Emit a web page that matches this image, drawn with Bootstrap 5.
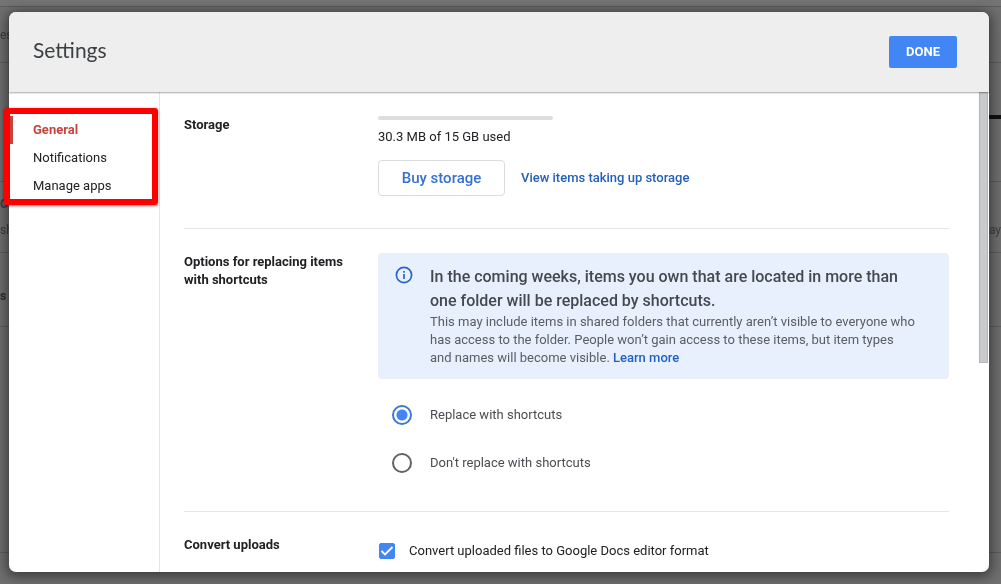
<!DOCTYPE html>
<html lang="en">
<head>
<meta charset="utf-8">
<meta name="viewport" content="width=device-width, initial-scale=1">
<title>Settings</title>
<link href="https://cdn.jsdelivr.net/npm/bootstrap@5.3.0/dist/css/bootstrap.min.css" rel="stylesheet">
<style>
  body { font-family: Roboto, "Liberation Sans", sans-serif; font-size: 13px; line-height: 18px; color: #202124; background: #6f6f70; }
  .shell { height: 100vh; padding: 12px 12px 12px 9px; }
  /* dimmed file list behind the dialog */
  .page-behind { z-index: 0; color: #3d3e40; font-size: 12px; }
  .page-behind .line { border-bottom: 1px solid #5c5c5d; }
  .line-top { height: 7px; background: #747475; }
  .line-bar { height: 56px; }
  .line-head { height: 119px; }
  .line-file { height: 71px; }
  .line-day { height: 74px; padding-top: 12px; color: #2c2c2e; }
  .line-rest { height: 226px; }
  .scroll-mark { width: 12px; height: 4px; margin-top: 52px; background: #111; }
  .dialog-box { z-index: 1; border-radius: 7px; background: #fff; box-shadow: 0 2px 12px 3px rgba(0,0,0,.45); }
  .dialog-head { height: 80px; padding: 0 32px 0 24px; background: #eee; border-radius: 7px 7px 0 0; box-shadow: 0 1px 2px rgba(0,0,0,.35); z-index: 2; }
  .dialog-title { padding-bottom: 4px; font-family: Lato, Roboto, sans-serif; font-size: 21px; line-height: 24px; color: #3c4043; }
  .btn-done { width: 68px; height: 32px; padding: 0; font-size: 13px; font-weight: 700; color: #fff; background: #4285f4; border: 0; border-radius: 2px; }
  .side { width: 151px; padding-top: 24px; border-right: 1px solid #e5e5e5; }
  .side .nav-link { padding: 0 24px; line-height: 28px; color: #202124; }
  .side .nav-link.active { color: #c5443d; font-weight: 700; box-shadow: inset 4px 0 #c5443d; }
  .callout { top: 16px; left: -5px; right: 1px; height: 97px; border: 6px solid #f00; border-radius: 3px; box-shadow: 0 1px 3px rgba(0,0,0,.5); pointer-events: none; z-index: 3; }
  .pane { padding: 0 40px 0 24px; }
  .setting { padding: 24px 0; border-bottom: 1px solid #e5e5e5; }
  .setting-storage { padding-bottom: 32px; }
  .setting-name { width: 194px; padding-right: 24px; font-size: 13px; line-height: 18px; font-weight: 700; }
  .meter { width: 175px; height: 4px; border-radius: 2px; background: #dedede; }
  .storage-actions { gap: 16px; padding-top: 14px; }
  .btn-buy { width: 127px; height: 36px; padding: 0; font-size: 15px; line-height: 20px; font-weight: 500; color: #3571d0; border: 1px solid #dadce0; border-radius: 4px; }
  .link-blue { color: #2360bd; font-weight: 500; text-decoration: none; }
  .notice { margin-bottom: 12px; padding: 12px 32px 12px 14px; gap: 14px; background: #e8f0fe; border-radius: 4px; color: #5a5d61; }
  .notice-title { font-size: 16px; line-height: 24px; font-weight: 500; color: #45484c; }
  .choice { height: 48px; padding-left: 14px; gap: 18px; color: #4a4d51; }
  .choice .form-check-input { width: 20px; height: 20px; border: 2px solid #5f6368; }
  .choice .form-check-input:checked { border-color: #3b78d8; background-color: #fff; background-image: radial-gradient(circle, #4285f4 5px, transparent 6px); }
  .convert { gap: 14px; padding: 6px 0 0 1px; }
  .convert .form-check-input { width: 16px; height: 16px; border-radius: 2px; }
  .convert .form-check-input:checked { border-color: #4285f4; background-color: #4285f4; background-origin: border-box; background-image: url("data:image/svg+xml,%3Csvg xmlns='http://www.w3.org/2000/svg' viewBox='0 0 16 16'%3E%3Cpath d='M2.5 8l3.5 3.5L13.5 4' fill='none' stroke='%23fff' stroke-width='1.8'/%3E%3C/svg%3E"); }
  .thumb { top: 0; right: 1px; width: 9px; height: 56.5%; background: #c9cacc; border: 1px solid #b4b5b8; }
</style>
</head>
<body class="overflow-hidden">
<div class="page-behind position-fixed top-0 start-0 w-100" aria-hidden="true">
  <div class="line line-top"></div>
  <div class="line line-bar d-flex align-items-center"><span>es</span></div>
  <div class="line line-head d-flex justify-content-end"><div class="scroll-mark"></div></div>
  <div class="line line-file d-flex flex-column justify-content-center"><b>C</b><div class="d-flex justify-content-between mt-2"><span>sh</span><span>ay</span></div></div>
  <div class="line line-day d-flex align-items-center"><b>s</b></div>
  <div class="line line-rest"></div>
</div>
<div class="shell">
  <main class="dialog-box position-relative d-flex flex-column h-100" role="dialog" aria-labelledby="title">
    <header class="dialog-head position-relative d-flex flex-shrink-0 align-items-center justify-content-between">
      <h1 class="dialog-title fw-normal mb-0" id="title">Settings</h1>
      <button type="button" class="btn btn-done">DONE</button>
    </header>
    <div class="d-flex flex-grow-1 position-relative" style="min-height:0">
      <nav class="side nav flex-column flex-nowrap flex-shrink-0 position-relative">
        <a class="nav-link active" href="#general">General</a>
        <a class="nav-link" href="#notifications">Notifications</a>
        <a class="nav-link" href="#apps">Manage apps</a>
        <div class="callout position-absolute"></div>
      </nav>
      <div class="pane flex-grow-1 overflow-hidden" id="general">
        <section class="setting setting-storage d-flex">
          <h2 class="setting-name flex-shrink-0 mb-0">Storage</h2>
          <div class="flex-grow-1">
            <div class="meter mb-2"></div>
            <div>30.3 MB of 15 GB used</div>
            <div class="storage-actions d-flex align-items-center">
              <button type="button" class="btn btn-buy">Buy storage</button>
              <a class="link-blue" href="#storage">View items taking up storage</a>
            </div>
          </div>
        </section>
        <section class="setting d-flex">
          <h2 class="setting-name flex-shrink-0 mb-0">Options for replacing items with shortcuts</h2>
          <div class="flex-grow-1">
            <div class="notice d-flex">
              <svg class="flex-shrink-0" width="24" height="24" viewBox="0 0 24 24" fill="none" stroke="#2a66c8" stroke-width="1.7"><circle cx="12" cy="10" r="7.6"/><path d="M12 9v5M12 6v1.8"/></svg>
              <div>
                <h3 class="notice-title mb-0">In the coming weeks, items you own that are located in more than one folder will be replaced by shortcuts.</h3>
                <p class="mb-0">This may include items in shared folders that currently aren’t visible to everyone who has access to the folder. People won’t gain access to these items, but item types and names will become visible. <a class="link-blue" href="#learn">Learn more</a></p>
              </div>
            </div>
            <div class="choice d-flex align-items-center">
              <input class="form-check-input m-0" type="radio" name="shortcuts" id="yes" checked>
              <label for="yes">Replace with shortcuts</label>
            </div>
            <div class="choice d-flex align-items-center">
              <input class="form-check-input m-0" type="radio" name="shortcuts" id="no">
              <label for="no">Don't replace with shortcuts</label>
            </div>
          </div>
        </section>
        <section class="setting d-flex">
          <h2 class="setting-name flex-shrink-0 mb-0">Convert uploads</h2>
          <div class="convert d-flex align-items-center">
            <input class="form-check-input m-0" type="checkbox" id="convert" checked>
            <label for="convert">Convert uploaded files to Google Docs editor format</label>
          </div>
        </section>
      </div>
      <div class="thumb position-absolute"></div>
    </div>
  </main>
</div>
<script src="https://cdn.jsdelivr.net/npm/bootstrap@5.3.0/dist/js/bootstrap.bundle.min.js"></script>
</body>
</html>
